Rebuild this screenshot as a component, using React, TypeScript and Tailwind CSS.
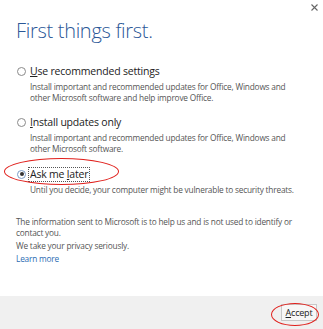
import React from "react";

const font = { fontFamily: '"Open Sans", "Liberation Sans", sans-serif' };

function Radio({ checked = false }: { checked?: boolean }) {
  return (
    <span
      className={`flex h-[9px] w-[9px] flex-none items-center justify-center rounded-full border bg-white ${
        checked ? "border-[#7a9cc6]" : "border-[#8a8a8a]"
      }`}
    >
      {checked && <span className="h-[4px] w-[4px] rounded-full bg-[#333]" />}
    </span>
  );
}

function Option({
  label,
  accessKey,
  rest,
  desc,
  checked = false,
}: {
  label?: string;
  accessKey: string;
  rest: string;
  desc: React.ReactNode;
  checked?: boolean;
}) {
  return (
    <div>
      <div className="flex h-[14px] items-center gap-[3px]">
        <Radio checked={checked} />
        <span
          className={`whitespace-nowrap px-[1px] text-[10.5px] leading-[13px] tracking-[-0.2px] text-[#222] ${
            checked ? "outline outline-1 outline-dotted outline-[#555]" : ""
          }`}
        >
          {label}
          <span className="underline underline-offset-[1px]">{accessKey}</span>
          {rest}
        </span>
      </div>
      <div className="mt-[3px] whitespace-nowrap pl-[13px] text-[8.3px] leading-[11px] tracking-[-0.2px] text-[#555]">
        {desc}
      </div>
    </div>
  );
}

export default function App() {
  return (
    <div className="relative flex h-[329px] w-[323px] flex-col overflow-hidden bg-white" style={font}>
      {/* close */}
      <svg className="absolute right-[5px] top-[4px]" width="7" height="7" viewBox="0 0 7 7">
        <path d="M0.5 0.5L6.5 6.5M6.5 0.5L0.5 6.5" stroke="#666" strokeWidth="1.1" />
      </svg>

      <div className="flex-1 px-4 pt-[16px]">
        <h1 className="text-[20px] font-light leading-[30px] tracking-[-0.3px] text-[#2b5797]">First things first.</h1>

        <div className="mt-[18px] pl-[1px]">
          <Option
            accessKey="U"
            rest="se recommended settings"
            desc={
              <>
                Install important and recommended updates for Office, Windows and
                <br />
                other Microsoft software and help improve Office.
              </>
            }
          />
        </div>
        <div className="mt-[12px] pl-[1px]">
          <Option
            accessKey="I"
            rest="nstall updates only"
            desc={
              <>
                Install important and recommended updates for Office, Windows and
                <br />
                other Microsoft software.
              </>
            }
          />
        </div>
        <div className="mt-[13px] pl-[1px]">
          <Option
            checked
            label="Ask me "
            accessKey="l"
            rest="ater"
            desc="Until you decide, your computer might be vulnerable to security threats."
          />
        </div>

        <div className="mt-[21px] whitespace-nowrap text-[8.3px] leading-[11px] tracking-[-0.2px] text-[#555]">
          <p>
            The information sent to Microsoft is to help us and is not used to identify or
            <br />
            contact you.
          </p>
          <p className="mt-[2px]">We take your privacy seriously.</p>
          <p className="mt-[2px] text-[#2b6cb3]">Learn more</p>
        </div>
      </div>

      <div className="flex h-[33px] flex-none items-center justify-end bg-[#f0f0f0] pr-[6px]">
        <button className="h-[17px] w-[36px] border border-[#c8c8c8] bg-[#f7f7f7] text-[9px] leading-[15px] tracking-[-0.2px] text-[#222]">
          <span className="underline">A</span>ccept
        </button>
      </div>

      {/* annotation ellipses */}
      <div className="pointer-events-none absolute left-[4px] top-[158px] h-[27px] w-[115px] rounded-[50%] border-[1.5px] border-[#e0201c]" />
      <div className="pointer-events-none absolute left-[271px] top-[303px] h-[23px] w-[48px] rounded-[50%] border-[1.5px] border-[#e0201c]" />
    </div>
  );
}
